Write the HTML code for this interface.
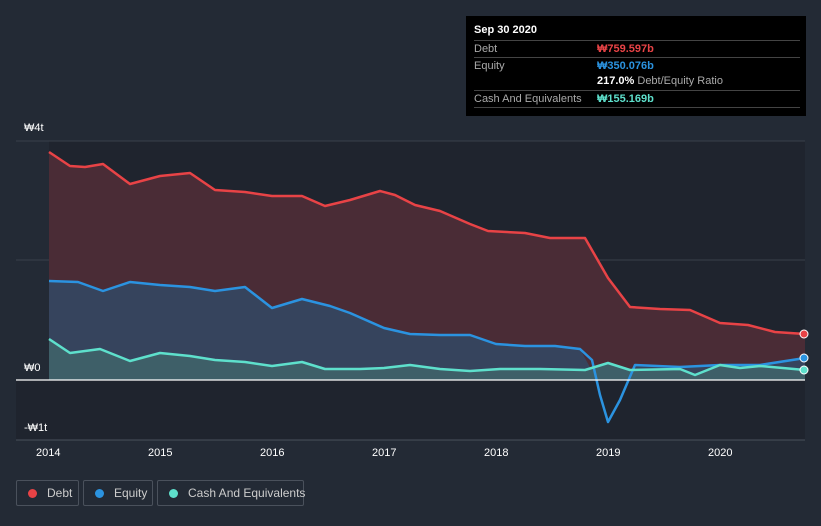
<!DOCTYPE html>
<html><head><style>
body{margin:0;width:821px;height:526px;background:#232a35;font-family:"Liberation Sans",sans-serif;position:relative;overflow:hidden}
.t{position:absolute;color:#fff;font-size:11px}
.tip{position:absolute;left:466px;top:16px;width:340px;height:100px;background:#000}
.tip .r{position:absolute;left:8px;width:326px;border-top:1px solid #444;font-size:11px;color:#aaa;height:16px;line-height:16px}
.leg{position:absolute;top:480px;height:26px;border:1px solid #4a515c;border-radius:2px;color:#ccc;font-size:12px;line-height:25px;box-sizing:border-box;white-space:nowrap}
.leg i{display:inline-block;width:9px;height:9px;border-radius:50%;margin:0 10px 0 11px;vertical-align:-1px}
</style></head><body>
<svg width="821" height="526" style="position:absolute;left:0;top:0">
<rect x="16" y="141" width="789" height="299" fill="#1f242e"/>
<rect x="16" y="141" width="33" height="239" fill="#232a35"/>
<line x1="16" y1="141" x2="805" y2="141" fill="none" stroke="#3a404a"/>
<line x1="16" y1="260" x2="805" y2="260" stroke="#3a404a"/>
<polygon fill="#4a2c36" points="49,380 49,152 70,166 85,167 103,164 130,184 160,176 190,173 215,190 245,192 272,196 302,196 325,206 350,200 380,191 395,195 415,205 440,211 470,224 488,231 525,233 550,238 585,238 608,278 630,307 660,309 690,310 720,323 748,325 775,332 805,334 805,380"/>
<polygon fill="#36445d" points="49,380 49,281 78,282 103,291 130,282 160,285 190,287 215,291 245,287 272,308 302,299 330,306 350,313 384,328 410,334 440,335 470,335 496,344 525,346 555,346 580,349 597,380"/>
<polygon fill="#36445d" points="622,380 635,365 680,367 720,365 760,365 805,358 805,380"/>
<polygon fill="#3e5f68" points="49,380 49,339 70,353 100,349 130,361 160,353 190,356 215,360 245,362 272,366 302,362 325,369 360,369 384,368 410,365 440,369 470,371 500,369 540,369 585,370 608,363 630,370 680,369 695,375 720,365 740,368 760,366 805,370 805,380"/>
<polyline fill="none" stroke="#e84346" stroke-width="2.5" stroke-linejoin="round" points="49,152 70,166 85,167 103,164 130,184 160,176 190,173 215,190 245,192 272,196 302,196 325,206 350,200 380,191 395,195 415,205 440,211 470,224 488,231 525,233 550,238 585,238 608,278 630,307 660,309 690,310 720,323 748,325 775,332 805,334"/>
<polyline fill="none" stroke="#2b93e0" stroke-width="2.5" stroke-linejoin="round" points="49,281 78,282 103,291 130,282 160,285 190,287 215,291 245,287 272,308 302,299 330,306 350,313 384,328 410,334 440,335 470,335 496,344 525,346 555,346 580,349 592,360 600,395 608,422 620,400 635,365 680,367 720,365 760,365 805,358"/>
<polyline fill="none" stroke="#5ee0cc" stroke-width="2.5" stroke-linejoin="round" points="49,339 70,353 100,349 130,361 160,353 190,356 215,360 245,362 272,366 302,362 325,369 360,369 384,368 410,365 440,369 470,371 500,369 540,369 585,370 608,363 630,370 680,369 695,375 720,365 740,368 760,366 805,370"/>
<line x1="16" y1="380" x2="805" y2="380" stroke="#fff" stroke-width="1.2"/>
<line x1="16" y1="440" x2="805" y2="440" stroke="#4a515c"/>
<circle cx="804" cy="334" r="4" fill="#e84346" stroke="#fff"/>
<circle cx="804" cy="358" r="4" fill="#2b93e0" stroke="#fff"/>
<circle cx="804" cy="370" r="4" fill="#5ee0cc" stroke="#fff"/>
</svg>
<div class="t" style="left:24px;top:122px">₩4t</div>
<div class="t" style="left:24px;top:362px">₩0</div>
<div class="t" style="left:24px;top:422px">-₩1t</div>
<div class="t" style="left:36px;top:447px">2014</div>
<div class="t" style="left:148px;top:447px">2015</div>
<div class="t" style="left:260px;top:447px">2016</div>
<div class="t" style="left:372px;top:447px">2017</div>
<div class="t" style="left:484px;top:447px">2018</div>
<div class="t" style="left:596px;top:447px">2019</div>
<div class="t" style="left:708px;top:447px">2020</div>
<div class="tip">
<div style="position:absolute;left:8px;top:8px;color:#fff;font-weight:bold;font-size:11px">Sep 30 2020</div>
<div class="r" style="top:24px">Debt<span style="position:absolute;left:123px;color:#e84346;font-weight:bold">₩759.597b</span></div>
<div class="r" style="top:41px">Equity<span style="position:absolute;left:123px;color:#2b93e0;font-weight:bold">₩350.076b</span></div>
<div class="r" style="top:57px;border:0"><span style="position:absolute;left:123px"><b style="color:#fff">217.0%</b> Debt/Equity Ratio</span></div>
<div class="r" style="top:74px">Cash And Equivalents<span style="position:absolute;left:123px;color:#5ee0cc;font-weight:bold">₩155.169b</span></div>
<div class="r" style="top:91px;height:0"></div>
</div>
<div class="leg" style="left:16px;width:63px"><i style="background:#e84346"></i>Debt</div>
<div class="leg" style="left:83px;width:70px"><i style="background:#2b93e0"></i>Equity</div>
<div class="leg" style="left:157px;width:147px"><i style="background:#5ee0cc"></i>Cash And Equivalents</div>
</body></html>
